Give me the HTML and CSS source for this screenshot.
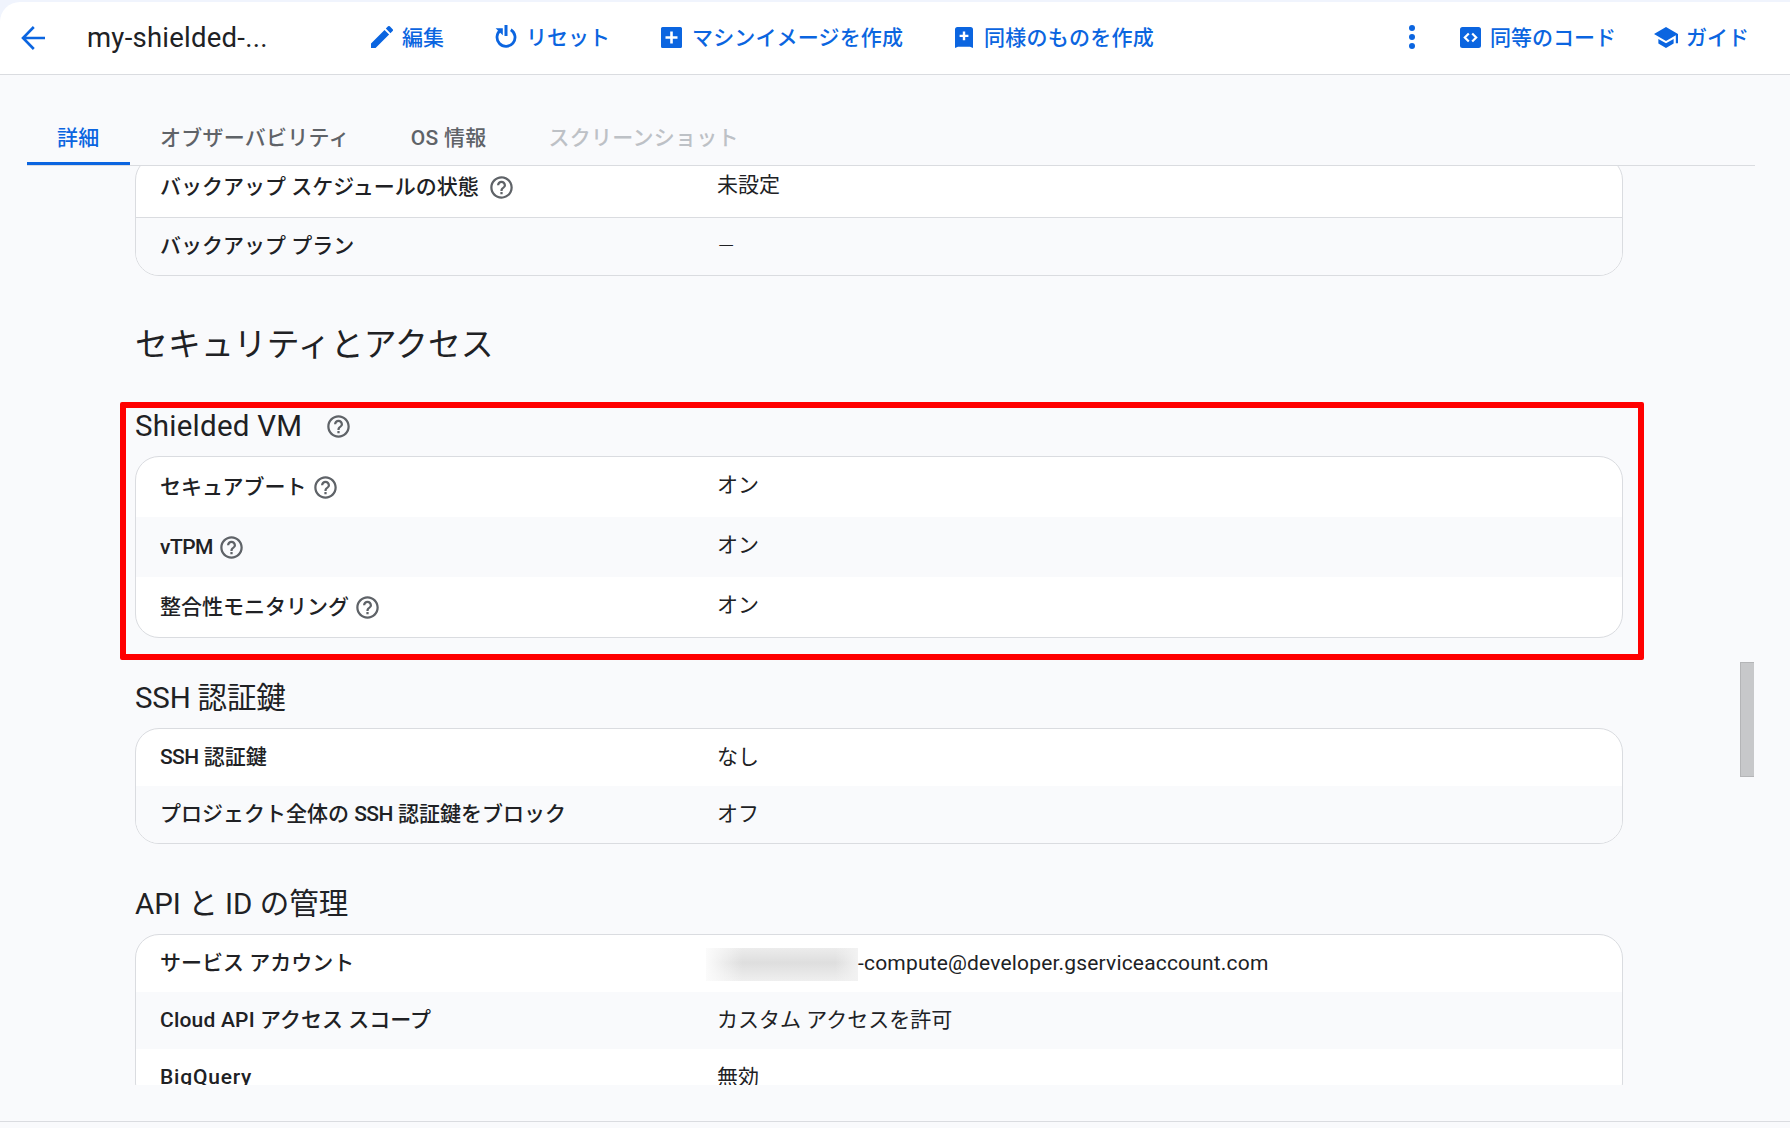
FILE: index.html
```
<!DOCTYPE html>
<html lang="ja">
<head>
<meta charset="UTF-8">
<meta name="viewport" content="width=device-width, initial-scale=1.0">
<title>my-shielded-vm</title>
<link rel="stylesheet" href="styles.css">
</head>
<body>

<!-- shared help icon -->
<svg class="defs" width="0" height="0">
  <symbol id="help" viewBox="0 0 24 24">
    <path d="M11 18h2v-2h-2v2zm1-16C6.48 2 2 6.48 2 12s4.48 10 10 10 10-4.48 10-10S17.52 2 12 2zm0 18c-4.41 0-8-3.59-8-8s3.59-8 8-8 8 3.59 8 8-3.59 8-8 8zm0-14c-2.21 0-4 1.79-4 4h2c0-1.1.9-2 2-2s2 .9 2 2c0 2-3 1.75-3 5h2c0-2.25 3-2.5 3-5 0-2.21-1.79-4-4-4z"/>
  </symbol>
</svg>

<div class="page">
  <header class="toolbar">
    <a class="back"><svg width="24" height="24" viewBox="0 0 24 24" stroke="currentColor" stroke-width="2.6"><path fill="none" d="M24 12H2M12.8 1L2 12l10.8 11"/></svg></a>
    <h1 class="title">my-shielded-...</h1>
    <div class="action edit">
      <svg width="22" height="22" viewBox="3 3 18 18"><path d="M3 17.25V21h3.75L17.81 9.94l-3.75-3.75L3 17.25zM20.71 7.04a1 1 0 0 0 0-1.41l-2.34-2.34a1 1 0 0 0-1.41 0l-1.83 1.83 3.75 3.75 1.83-1.83z"/></svg>
      <span>編集</span>
    </div>
    <div class="action reset">
      <svg width="22" height="24" viewBox="0 0 22 24"><path fill="none" stroke="currentColor" stroke-width="2.8" d="M15.8 4.7a9 9 0 1 1-10 .3"/><path d="M.6 3.2h7.2v7z"/><path d="M9.5 0h3v11h-3z"/></svg>
      <span>リセット</span>
    </div>
    <div class="action image">
      <svg width="21" height="21" viewBox="0 0 21 21"><path fill-rule="evenodd" d="M1.5 0h18A1.5 1.5 0 0 1 21 1.5v18a1.5 1.5 0 0 1-1.5 1.5h-18A1.5 1.5 0 0 1 0 19.5V1.5A1.5 1.5 0 0 1 1.5 0zM9.2 4.5v4.7H4.5v2.6h4.7v4.7h2.6v-4.7h4.7V9.2h-4.7V4.5z"/></svg>
      <span>マシンイメージを作成</span>
    </div>
    <div class="action similar">
      <svg width="18" height="21" viewBox="0 0 18 21"><path fill-rule="evenodd" d="M2.5 0h13A2.5 2.5 0 0 1 18 2.5V21l-3-1.3H3L0 21V2.5A2.5 2.5 0 0 1 2.5 0zM7.8 4.5v3.2H4.6v2.4h3.2v3.2h2.4v-3.2h3.2V7.7h-3.2V4.5z"/></svg>
      <span>同様のものを作成</span>
    </div>
    <div class="action more">
      <svg width="6" height="24" viewBox="0 0 6 24"><circle cx="3" cy="3" r="3"/><circle cx="3" cy="12" r="3"/><circle cx="3" cy="21" r="3"/></svg>
    </div>
    <div class="action code">
      <svg width="21" height="21" viewBox="0 0 21 21"><rect width="21" height="21" rx="2.5"/><path fill="none" stroke="#fff" stroke-width="2.2" d="M8.8 6.5l-4 4 4 4M12.2 6.5l4 4-4 4"/></svg>
      <span>同等のコード</span>
    </div>
    <div class="action guide">
      <svg width="24" height="21" viewBox="1 3 22 18" preserveAspectRatio="none"><path d="M5 13.18v4L12 21l7-3.82v-4L12 17l-7-3.82zM12 3L1 9l11 6 9-4.91V17h2V9L12 3z"/></svg>
      <span>ガイド</span>
    </div>
  </header>

  <nav class="tabs">
    <a class="tab active">詳細</a>
    <a class="tab">オブザーバビリティ</a>
    <a class="tab">OS 情報</a>
    <a class="tab disabled">スクリーンショット</a>
  </nav>

  <main class="content">
    <div class="card backup">
      <div class="row tall divider">
        <div class="label">バックアップ スケジュールの状態<svg class="help spaced"><use href="#help"/></svg></div>
        <div class="value">未設定</div>
      </div>
      <div class="row">
        <div class="label">バックアップ プラン</div>
        <div class="value"><span class="dash">—</span></div>
      </div>
    </div>

    <h2 class="section">セキュリティとアクセス</h2>

    <section class="highlight">
      <h3 class="sub">Shielded VM<svg class="help"><use href="#help"/></svg></h3>
      <div class="card">
        <div class="row tall">
          <div class="label">セキュアブート<svg class="help"><use href="#help"/></svg></div>
          <div class="value">オン</div>
        </div>
        <div class="row tall shade">
          <div class="label"><span class="vtpm">vTPM</span><svg class="help"><use href="#help"/></svg></div>
          <div class="value">オン</div>
        </div>
        <div class="row tall">
          <div class="label">整合性モニタリング<svg class="help"><use href="#help"/></svg></div>
          <div class="value">オン</div>
        </div>
      </div>
    </section>

    <h3 class="sub ssh">SSH 認証鍵</h3>
    <div class="card">
      <div class="row">
        <div class="label"><span class="ssh-label">SSH</span> 認証鍵</div>
        <div class="value">なし</div>
      </div>
      <div class="row shade">
        <div class="label">プロジェクト全体の <span class="ssh-label">SSH</span> 認証鍵をブロック</div>
        <div class="value">オフ</div>
      </div>
    </div>

    <h3 class="sub api">API と ID の管理</h3>
    <div class="card">
      <div class="row">
        <div class="label">サービス アカウント</div>
        <div class="value account"><span class="redacted"></span><span class="email">-compute@developer.gserviceaccount.com</span></div>
      </div>
      <div class="row shade">
        <div class="label"><span class="cloud">Cloud API</span> アクセス スコープ</div>
        <div class="value">カスタム アクセスを許可</div>
      </div>
      <div class="row">
        <div class="label"><span class="bigquery">BigQuery</span></div>
        <div class="value">無効</div>
      </div>
    </div>
  </main>
  <div class="scroll-thumb"></div>
  <footer class="bottom"></footer>
</div>

</body>
</html>
```
FILE: styles.css
```
* {
  box-sizing: border-box;
}
body {
  margin: 0;
  background: #f0f4fd;
  color: #202124;
  font-family: Roboto, "Noto Sans CJK JP", sans-serif;
  font-size: 21px;
}
h1, h2, h3 {
  margin: 0;
  font-weight: 400;
}
svg {
  display: block;
  flex: none;
  fill: currentColor;
}
.defs {
  position: absolute;
}
.page {
  position: relative;
  height: 1128px;
  padding-top: 2px;
  overflow: hidden;
  display: flex;
  flex-direction: column;
}

/* toolbar */
.toolbar {
  flex: none;
  height: 73px;
  display: flex;
  align-items: center;
  background: #fff;
  border-bottom: 1px solid #dadce0;
  border-top-left-radius: 20px;
  padding: 0 41px 1px 21px;
  color: #0b65e0;
  white-space: nowrap;
}
.title {
  width: 240px;
  margin-left: 42px;
  padding-top: 1px;
  font-size: 27.5px;
  line-height: 36px;
  letter-spacing: 0.25px;
  color: #202124;
}
.action {
  display: flex;
  align-items: center;
  gap: 9px;
  font-weight: 500;
  line-height: 30px;
}
.action > svg {
  margin-bottom: 1px;
}
.edit {
  margin-left: 44px;
}
.reset {
  margin-left: 51px;
}
.image {
  margin-left: 51px;
  gap: 10px;
  letter-spacing: 0.15px;
}
.similar {
  margin-left: 52px;
  gap: 11px;
  letter-spacing: 0.25px;
}
.more {
  margin-left: auto;
}
.code {
  margin-left: 45px;
}
.guide {
  margin-left: 38px;
  gap: 8px;
}

/* tabs */
.tabs {
  flex: none;
  height: 91px;
  display: flex;
  align-items: flex-end;
  padding: 0 35px 1px 27px;
  background: linear-gradient(#dadce0, #dadce0) 27px 100% / 1728px 1px no-repeat #f9fafc;
}
.tab {
  height: 60px;
  padding: 0 31px 0 30px;
  line-height: 66px;
  font-weight: 500;
  letter-spacing: 0.25px;
  color: #5f6368;
  white-space: nowrap;
}
.tab.active {
  width: 103px;
  color: #0b65e0;
  border-bottom: 3px solid #0b65e0;
}
.tab.disabled {
  margin-left: 1px;
  color: #bdc1c6;
}

/* details */
.content {
  flex: none;
  height: 919px;
  overflow: hidden;
  background: #f9fafc;
  padding: 0 167px 0 135px;
}
.card {
  background: #fff;
  border: 1px solid #dadce0;
  border-radius: 24px;
  overflow: hidden;
}
.backup {
  margin-top: -10px;
}
.backup .row:last-child {
  background: #f9fafc;
}
.row {
  display: flex;
  height: 57px;
  padding: 0 24px;
  line-height: 56px;
}
.row.tall {
  height: 60px;
}
.row.divider {
  height: 61px;
  border-bottom: 1px solid #dadce0;
}
.shade {
  background: #f9fafc;
}
.label {
  width: 557px;
  font-weight: 500;
  white-space: nowrap;
}
.tall .label {
  display: flex;
  line-height: 60px;
}
.dash {
  margin-left: 1px;
  font-weight: 300;
}
.help {
  width: 27px;
  height: 27px;
  margin: 17px 0 0 5px;
  color: #5f6368;
}
.help.spaced {
  margin-left: 9px;
}
.vtpm {
  letter-spacing: -0.5px;
}
.ssh-label {
  letter-spacing: -0.6px;
}
.cloud {
  letter-spacing: 0.2px;
}
.bigquery {
  letter-spacing: 0.8px;
}
.email {
  letter-spacing: 0.18px;
}
.section {
  margin-top: 45px;
  font-size: 32.8px;
  line-height: 48px;
  letter-spacing: 0.15px;
}
.sub {
  display: flex;
  align-items: center;
  font-size: 29.5px;
  line-height: 40px;
}
.sub .help {
  margin: 0 0 0 23px;
}
.highlight {
  margin: 33px -21px 0 -15px;
  height: 258px;
  padding: 0 15px 0 9px;
  border: 6px solid #f00;
  border-radius: 2px;
}
.highlight .sub {
  height: 36px;
  margin-bottom: 12px;
  letter-spacing: 0.25px;
}
.ssh {
  margin: 18px 0 10px;
  letter-spacing: -0.2px;
}
.api {
  margin: 40px 0 10px;
}
.account {
  display: flex;
}
.redacted {
  width: 152px;
  height: 33px;
  margin: 13px 0 0 -11px;
  background: linear-gradient(90deg, #fbfbfb 0, rgba(251, 251, 251, 0) 24%, rgba(240, 240, 240, 0) 85%, #f2f2f2), linear-gradient(#ececec, #dedede 45%, #efefef);
}

.scroll-thumb {
  position: absolute;
  left: 1740px;
  top: 662px;
  width: 14px;
  height: 115px;
  background: #c7c8ca;
  border: 1px solid #b4b5b7;
  border-right: 0;
}
.bottom {
  flex: 1;
  background: linear-gradient(#dadce0, #dadce0) 0 36px / 100% 1px no-repeat #f9fafc;
}
```
